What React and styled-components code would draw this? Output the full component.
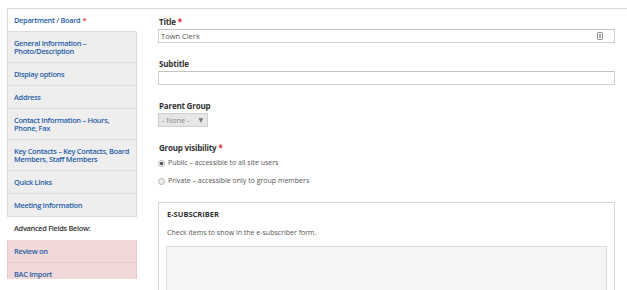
import styled, { createGlobalStyle } from "styled-components"

const GlobalStyle = createGlobalStyle`
  body {
    margin: 0;
    background: #fff;
    font-family: "Open Sans", "DejaVu Sans", sans-serif;
  }
`

const Page = styled.div`
  margin: 8px 0 0 7px;
  height: 282px;
  border-top: 1px solid #d9d9d9;
  display: flex;
  align-items: flex-start;
  overflow: hidden;
`

const Sidebar = styled.ul`
  list-style: none;
  margin: 0;
  padding: 0;
  width: 130px;
  height: 270px;
  overflow: hidden;
  flex-shrink: 0;
`

const tabColors = {
  active: { bg: "#fff", border: "#dcdcdc", color: "#1f5ea8" },
  normal: { bg: "#eeeeee", border: "#dcdcdc", color: "#1f5ea8" },
  plain: { bg: "#fff", border: "transparent", color: "#333" },
  alert: { bg: "#f1d9da", border: "#e4cacb", color: "#1f5ea8" },
}

const Tab = styled.li`
  box-sizing: border-box;
  padding: 7px 6px 7px 6px;
  font-size: 7.4px;
  line-height: 8px;
  font-weight: 600;
  letter-spacing: -0.3px;
  color: ${(p) => tabColors[p.$kind].color};
  background: ${(p) => tabColors[p.$kind].bg};
  border-left: 1px solid ${(p) => tabColors[p.$kind].border};
  border-right: 1px solid
    ${(p) => (p.$kind === "active" ? "transparent" : tabColors[p.$kind].border)};
  border-bottom: 1px solid ${(p) => tabColors[p.$kind].border};
`

const Req = styled.span`
  color: #e0282e;
  margin-left: 2px;
`

const Main = styled.div`
  flex: 1;
  padding: 8px 12px 0 21px;
`

const Field = styled.div`
  margin-bottom: 16px;
`

const Label = styled.div`
  font-size: 8px;
  line-height: 10px;
  font-weight: 700;
  letter-spacing: -0.2px;
  color: #333;
  margin: 0 0 2px 1px;
`

const InputBox = styled.div`
  box-sizing: border-box;
  height: 14px;
  border: 1px solid #cfcfcf;
  border-top-color: #c4c4c4;
  display: flex;
  align-items: center;
  justify-content: space-between;
  padding: 0 11px 0 2px;
  font-size: 7.5px;
  color: #555;
`

const SelectBox = styled.div`
  box-sizing: border-box;
  width: 50px;
  height: 14px;
  border: 1px solid #cfcfcf;
  background: #e6e6e6;
  display: flex;
  align-items: center;
  justify-content: space-between;
  padding: 0 4px 0 3px;
  font-size: 7.5px;
  color: #888;
`

const Caret = styled.span`
  font-size: 6px;
  color: #777;
`

const RadioRow = styled.label`
  display: flex;
  align-items: center;
  gap: 3px;
  font-size: 7px;
  line-height: 10px;
  color: #555;
  margin: 5px 0 0 0;

  & + & {
    margin-top: 8px;
  }
`

const Radio = styled.span`
  box-sizing: border-box;
  width: 7px;
  height: 7px;
  border-radius: 50%;
  border: 1px solid #b5b5b5;
  background: ${(p) =>
    p.$checked ? "radial-gradient(circle, #555 0 1.3px, #eee 1.8px)" : "#eee"};
`

const Fieldset = styled.div`
  box-sizing: border-box;
  margin-top: 16px;
  border: 1px solid #d8d8d8;
  padding: 6px 7px 0 7px;
  height: 120px;
`

const Legend = styled.div`
  font-size: 7.5px;
  line-height: 10px;
  font-weight: 700;
  color: #333;
  margin-left: 1px;
`

const Help = styled.div`
  font-size: 7px;
  line-height: 10px;
  color: #555;
  margin: 9px 0 8px 1px;
`

const ListBox = styled.div`
  height: 60px;
  border: 1px solid #dadada;
  background: #f5f5f5;
`

const KeyIcon = () => (
  <svg width="6" height="8" viewBox="0 0 6 8">
    <rect x="0.5" y="0.5" width="5" height="7" rx="0.8" fill="#eee" stroke="#8a8a8a" />
    <rect x="2" y="2.5" width="2" height="1" fill="#777" />
    <rect x="2" y="4.5" width="2" height="1" fill="#777" />
  </svg>
)

const tabs = [
  { kind: "active", label: "Department / Board", req: true },
  { kind: "normal", label: "General Information – Photo/Description" },
  { kind: "normal", label: "Display options" },
  { kind: "normal", label: "Address" },
  { kind: "normal", label: "Contact Information – Hours, Phone, Fax" },
  { kind: "normal", label: "Key Contacts – Key Contacts, Board Members, Staff Members" },
  { kind: "normal", label: "Quick Links" },
  { kind: "normal", label: "Meeting Information" },
  { kind: "plain", label: "Advanced Fields Below:" },
  { kind: "alert", label: "Review on" },
  { kind: "alert", label: "BAC Import" },
]

export default function App() {
  return (
    <>
      <GlobalStyle />
      <Page>
        <Sidebar>
          {tabs.map((t) => (
            <Tab key={t.label} $kind={t.kind}>
              {t.label}
              {t.req && <Req>*</Req>}
            </Tab>
          ))}
        </Sidebar>
        <Main>
          <Field>
            <Label>
              Title<Req>*</Req>
            </Label>
            <InputBox>
              Town Clerk
              <KeyIcon />
            </InputBox>
          </Field>
          <Field>
            <Label>Subtitle</Label>
            <InputBox />
          </Field>
          <Field>
            <Label>Parent Group</Label>
            <SelectBox>
              - None -<Caret>▼</Caret>
            </SelectBox>
          </Field>
          <Label>
            Group visibility<Req>*</Req>
          </Label>
          <RadioRow>
            <Radio $checked />
            Public – accessible to all site users
          </RadioRow>
          <RadioRow>
            <Radio />
            Private – accessible only to group members
          </RadioRow>
          <Fieldset>
            <Legend>E-SUBSCRIBER</Legend>
            <Help>Check items to show in the e-subscriber form.</Help>
            <ListBox />
          </Fieldset>
        </Main>
      </Page>
    </>
  )
}
